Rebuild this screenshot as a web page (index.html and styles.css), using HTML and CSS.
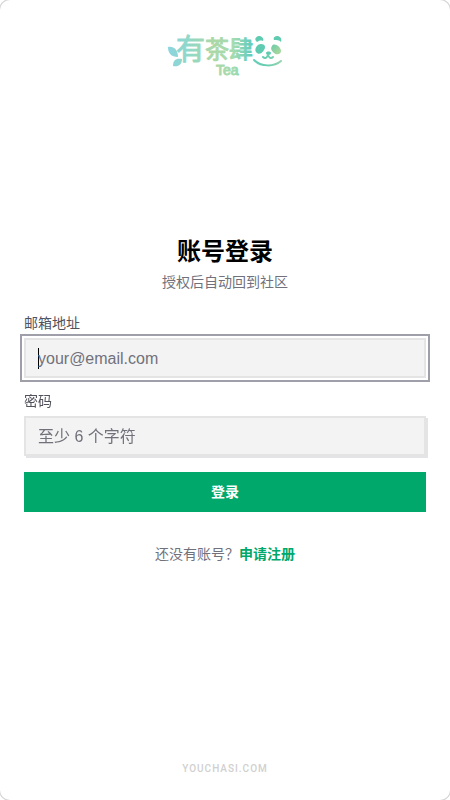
FILE: index.html
```html
<!DOCTYPE html>
<html lang="zh-CN">
<head>
<meta charset="utf-8">
<meta name="viewport" content="width=device-width, initial-scale=1">
<title>账号登录</title>
<link rel="stylesheet" href="styles.css">
</head>
<body>
<div class="page">
  <header class="header">
    <svg class="logo" viewBox="0 0 120 56" role="img" aria-label="有茶肆 Tea">
      <defs>
        <linearGradient id="tea" gradientUnits="userSpaceOnUse" x1="3" y1="0" x2="117" y2="0">
          <stop offset="0" stop-color="#8bd5df"/>
          <stop offset=".2" stop-color="#91d8c5"/>
          <stop offset=".4" stop-color="#acd7a5"/>
          <stop offset=".58" stop-color="#a2dbb1"/>
          <stop offset=".72" stop-color="#66cdbd"/>
          <stop offset=".86" stop-color="#66cdb0"/>
          <stop offset="1" stop-color="#98d5ad"/>
        </linearGradient>
        <linearGradient id="eye" x1="0" y1="0" x2="1" y2="1">
          <stop offset="0" stop-color="#6bcbaa"/>
          <stop offset="1" stop-color="#b4d99b"/>
        </linearGradient>
      </defs>
      <g fill="url(#tea)">
        <path d="M3 23c6-1 10 3 10 10-7 0-10-4-10-10Z"/>
        <path d="M8 42c0-6 3-8 9-7 0 6-4 8-9 7Z"/>
      </g>
      <g class="logo-name">
        <text x="11" y="36" font-size="29">有</text>
        <text x="40" y="34" font-size="24">茶</text>
        <text x="64" y="34" font-size="24">肆</text>
      </g>
      <text class="logo-tea" x="51" y="51" font-size="14">Tea</text>
      <g fill="#5fcbb1">
        <path d="M91 17c-2-3 1-5 4-5 3 1 4 3 3 5-3-1-4 0-6 1Z"/>
        <path d="M109 16c-1-3 1-4 4-4 3 1 4 3 3 6-2-2-4-2-7-2Z"/>
        <path d="M91 28c-2-3 1-8 5-8 4 0 5 3 3 6-2 4-6 5-8 2Z"/>
        <path d="M101 29c0-2 5-2 5 0 0 1-1 2-3 2-1 0-2-1-2-2Z"/>
      </g>
      <path fill="url(#eye)" d="M107 22c2-4 9 1 9 5 0 4-5 4-7 2s-4-4-2-7Z"/>
      <path class="smile" d="M89 36c7 7 20 7 27 1M98 33c2 2 4 1 5-2 1 3 3 4 5 2"/>
    </svg>
  </header>

  <main class="main">
    <h1 class="title">账号登录</h1>
    <p class="subtitle">授权后自动回到社区</p>
    <form class="form">
      <div class="field">
        <label class="label" for="email">邮箱地址</label>
        <input class="input" id="email" type="email" placeholder="your@email.com" autofocus>
      </div>
      <div class="field">
        <label class="label" for="password">密码</label>
        <input class="input" id="password" type="password" placeholder="至少 6 个字符">
      </div>
      <button class="submit" type="submit">登录</button>
    </form>
    <p class="signup">还没有账号？<a class="signup-link" href="#register">申请注册</a></p>
  </main>

  <footer class="footer">YOUCHASI.COM</footer>
</div>
</body>
</html>
```
FILE: styles.css
```css
*,
*::before,
*::after {
  box-sizing: border-box;
}

body {
  margin: 0;
  background: #fff;
  color: #09090b;
  font-family: "Liberation Sans", "Noto Sans CJK SC", sans-serif;
  font-size: 14px;
  line-height: 20px;
}

h1,
p {
  margin: 0;
}

.page {
  display: flex;
  flex-direction: column;
  min-height: 100vh;
  border-radius: 10px;
  box-shadow: 0 0 0 1px #d4d4d4;
}

.header {
  display: flex;
  flex: 1 1 0px;
  align-items: flex-start;
  justify-content: center;
  padding-top: 24px;
}

.logo {
  display: block;
  width: 120px;
  height: 56px;
  overflow: visible;
}

.logo-name,
.logo-tea {
  fill: url(#tea);
  stroke: url(#tea);
  stroke-width: 1px;
  stroke-linejoin: round;
  font-family: "Noto Sans CJK SC", sans-serif;
  font-weight: 400;
}

.logo-tea {
  font-family: "Liberation Sans", sans-serif;
}

.smile {
  fill: none;
  stroke: url(#tea);
  stroke-width: 2px;
  stroke-linecap: round;
  stroke-linejoin: round;
}

.main {
  padding: 0 24px;
}

.title {
  color: #000;
  font-size: 24px;
  font-weight: 700;
  line-height: 32px;
  text-align: center;
}

.subtitle {
  margin-top: 4px;
  color: #71717b;
  text-align: center;
}

.form {
  display: flex;
  flex-direction: column;
  gap: 16px;
  margin-top: 24px;
}

.field {
  display: flex;
  flex-direction: column;
  gap: 8px;
}

.label {
  color: #52525c;
  line-height: 14px;
}

.input {
  width: 100%;
  height: 40px;
  padding: 2px 12px 0;
  border: 2px solid #e4e4e4;
  border-radius: 0;
  background: #f3f3f3;
  box-shadow: 2px 2px 0 #e4e4e7;
  color: #09090b;
  font: inherit;
  font-size: 16px;
}

.input::placeholder {
  color: #71717b;
  opacity: 1;
}

.input:focus {
  outline: 2px solid #9f9fa9;
  outline-offset: 2px;
  box-shadow: none;
}

/* Steady insertion bar while the focused field is empty */
.input:focus:placeholder-shown {
  background: linear-gradient(#000, #000) 12px center / 1px 21px no-repeat #f3f3f3;
  caret-color: transparent;
}

.submit {
  height: 40px;
  border: 0;
  background: #00a86b;
  color: #fff;
  font: inherit;
  font-weight: 700;
  cursor: pointer;
}

.signup {
  margin-top: 32px;
  color: #71717b;
  text-align: center;
}

.signup-link {
  color: #00a86b;
  font-weight: 700;
  text-decoration: none;
}

.footer {
  display: flex;
  flex: 1 1 0px;
  align-items: flex-end;
  justify-content: center;
  padding-bottom: 24px;
  color: #d0d0d0;
  font-family: Roboto, sans-serif;
  font-size: 10px;
  font-weight: 500;
  line-height: 15px;
  letter-spacing: 1px;
}
```
